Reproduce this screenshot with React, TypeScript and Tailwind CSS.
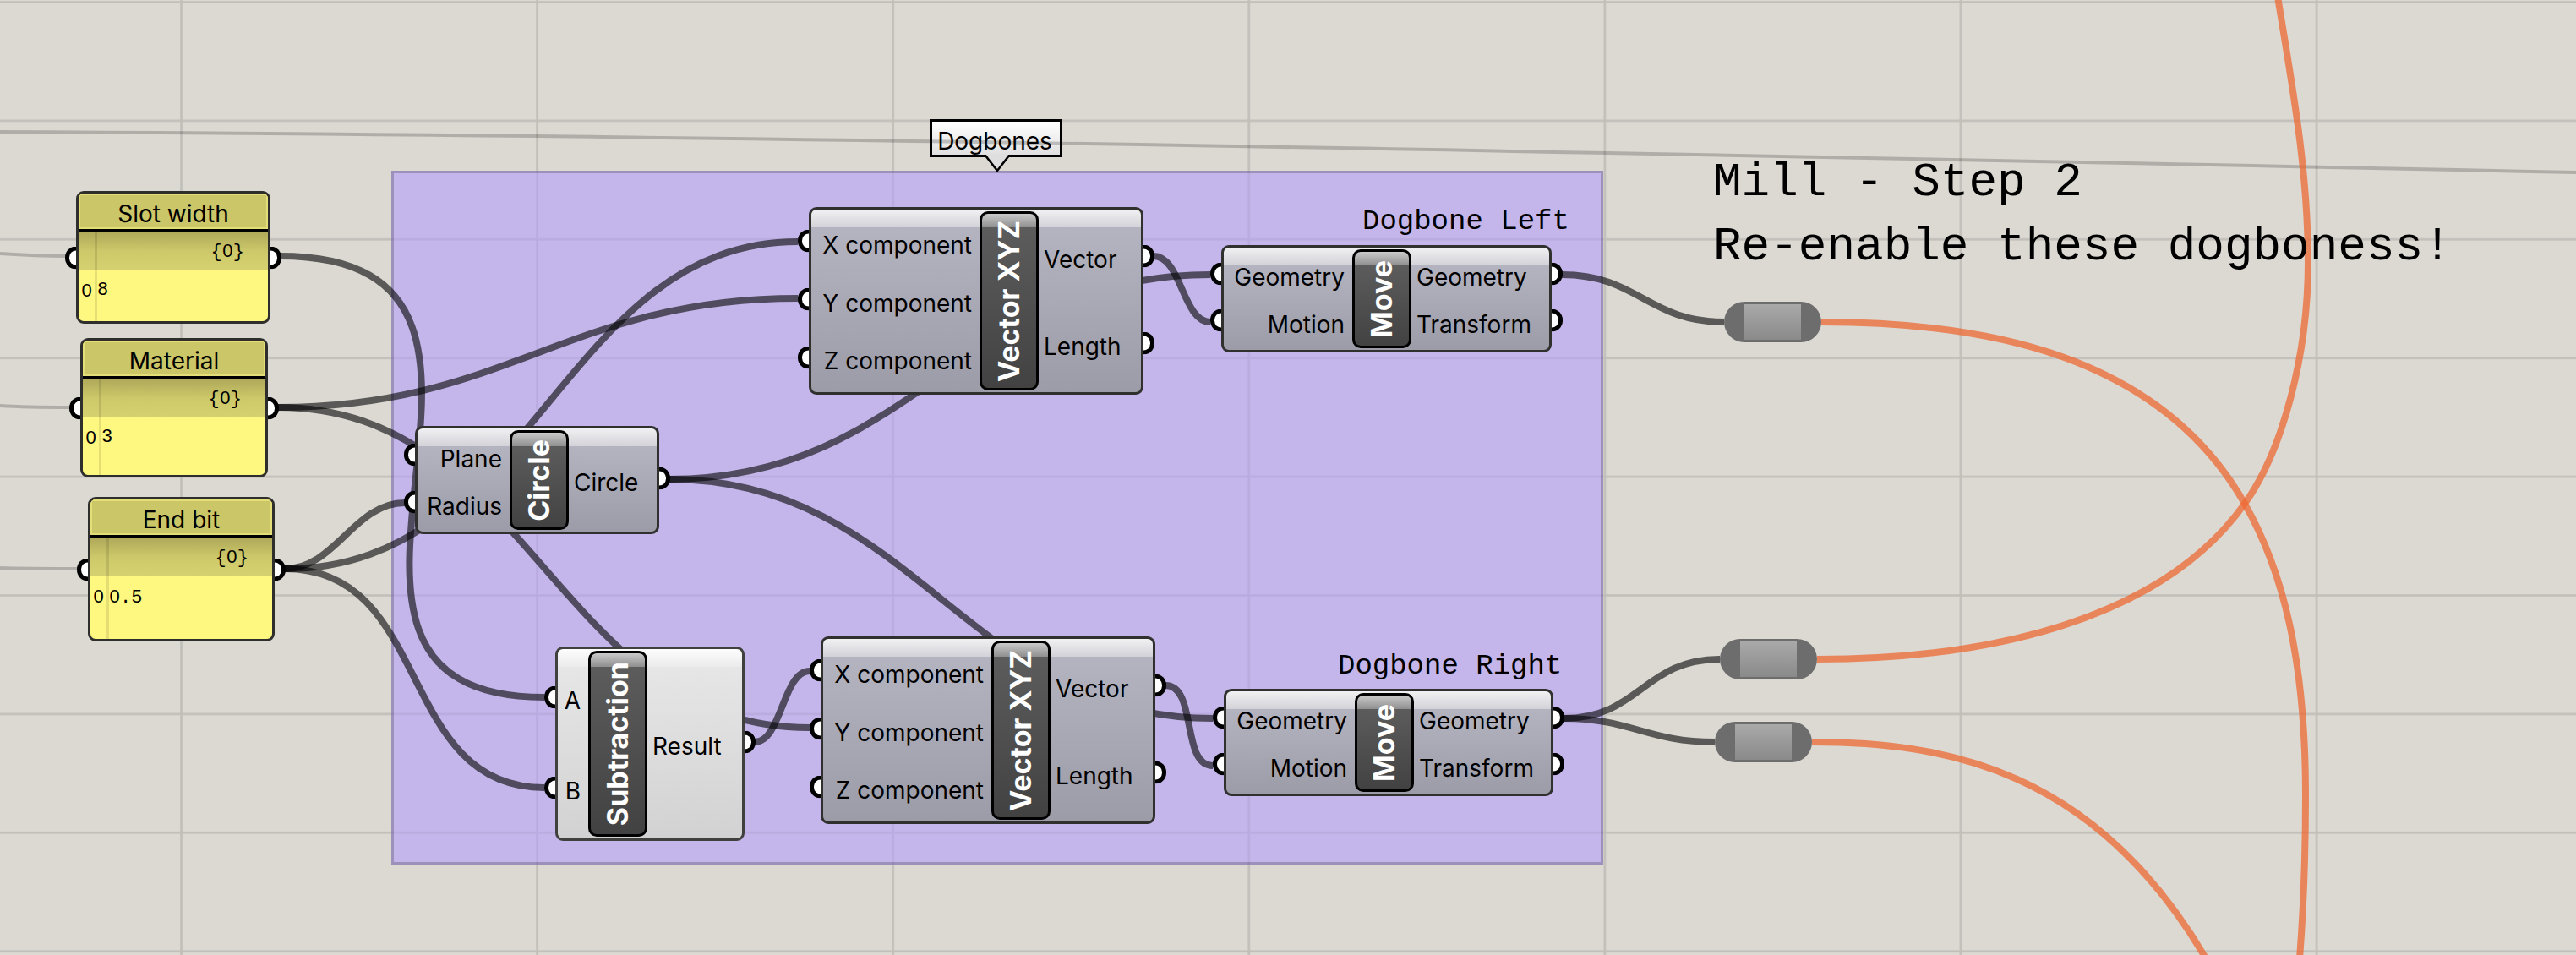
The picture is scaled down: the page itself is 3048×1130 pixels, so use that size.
import React from 'react';

type PanelData = { place: string; size: string; title: string; value: string };
type NodeData = {
  place: string;
  size: string;
  title: string;
  inputs: string[];
  outputs: string[];
  inputCol: string;
  plain?: boolean;
};

const panels: PanelData[] = [
  { place: 'left-[90px] top-[226px]', size: 'w-[230px] h-[157px]', title: 'Slot width', value: '8' },
  { place: 'left-[95px] top-[400px]', size: 'w-[222px] h-[165px]', title: 'Material', value: '3' },
  { place: 'left-[104px] top-[588px]', size: 'w-[221px] h-[171px]', title: 'End bit', value: '0.5' },
];

const nodes: NodeData[] = [
  {
    place: 'left-[491px] top-[504px]', size: 'w-[289px] h-[128px]', title: 'Circle',
    inputs: ['Plane', 'Radius'], outputs: ['Circle'], inputCol: 'w-[109px]',
  },
  {
    place: 'left-[657px] top-[765px]', size: 'w-[224px] h-[230px]', title: 'Subtraction',
    inputs: ['A', 'B'], outputs: ['Result'], inputCol: 'w-[36px]', plain: true,
  },
  {
    place: 'left-[957px] top-[245px]', size: 'w-[396px] h-[222px]', title: 'Vector XYZ',
    inputs: ['X component', 'Y component', 'Z component'], outputs: ['Vector', 'Length'],
    inputCol: 'w-[199px]',
  },
  {
    place: 'left-[971px] top-[753px]', size: 'w-[396px] h-[222px]', title: 'Vector XYZ',
    inputs: ['X component', 'Y component', 'Z component'], outputs: ['Vector', 'Length'],
    inputCol: 'w-[199px]',
  },
  {
    place: 'left-[1445px] top-[290px]', size: 'w-[391px] h-[127px]', title: 'Move',
    inputs: ['Geometry', 'Motion'], outputs: ['Geometry', 'Transform'], inputCol: 'w-[152px]',
  },
  {
    place: 'left-[1448px] top-[815px]', size: 'w-[390px] h-[127px]', title: 'Move',
    inputs: ['Geometry', 'Motion'], outputs: ['Geometry', 'Transform'], inputCol: 'w-[152px]',
  },
];

const relays = ['left-[2040px] top-[357px]', 'left-[2035px] top-[756px]', 'left-[2029px] top-[854px]'];

// A wire leaves and enters its ports horizontally; `pull` is the handle length.
const wire = (x0: number, y0: number, x1: number, y1: number, pull: number, endPull = pull) =>
  `M${x0} ${y0}C${x0 + pull} ${y0} ${x1 - endPull} ${y1} ${x1} ${y1}`;

const darkWires = [
  wire(331, 303, 644, 825, 374, 362),
  wire(329, 482, 944, 353, 270),
  wire(329, 482, 958, 861, 300),
  wire(337, 673, 479, 595, 60),
  wire(337, 673, 944, 286, 296, 280),
  wire(337, 673, 644, 932, 176),
  wire(792, 567, 1432, 325, 290),
  wire(792, 567, 1435, 850, 290),
  wire(893, 878, 958, 794, 32),
  wire(1365, 303, 1432, 381, 33),
  wire(1379, 811, 1435, 906, 38),
  wire(1848, 325, 2040, 381, 90),
  wire(1850, 850, 2035, 780, 90),
  wire(1850, 850, 2029, 878, 80),
];

const thinWires = [
  'M0 156C900 160 1900 180 3048 204',
  'M0 300C30 302 50 303 78 303',
  'M0 480C30 482 50 482 83 482',
  'M0 672C30 673 60 673 92 673',
];

const orangeWires = [
  'M2155 381C2350 381 2556 420 2656 596C2701 675 2728 780 2728 940C2728 1010 2726 1070 2721 1134',
  'M2150 780C2348 780 2556 736 2656 596C2701 533 2731 420 2731 310C2731 200 2711 95 2695 -4',
  'M2144 878C2300 878 2478 909 2610 1134',
];

function Zeroed({ text }: { text: string }) {
  return (
    <>
      {text.split('').map((ch, i) =>
        ch === '0' ? (
          <span key={i} className="inline-block w-[13px] text-center font-['Liberation_Sans',sans-serif]">0</span>
        ) : (
          <React.Fragment key={i}>{ch}</React.Fragment>
        ),
      )}
    </>
  );
}

function Port({ side }: { side: 'left' | 'right' }) {
  return side === 'left' ? (
    <span className="absolute right-full top-1/2 h-[27px] w-[13px] -translate-y-1/2 rounded-l-full border-[5px] border-r-0 border-black bg-white" />
  ) : (
    <span className="absolute left-full top-1/2 h-[27px] w-[13px] -translate-y-1/2 rounded-r-full border-[5px] border-l-0 border-black bg-white" />
  );
}

function Panel({ place, size, title, value }: PanelData) {
  return (
    <section className={`absolute ${place} ${size}`}>
      <Port side="left" />
      <Port side="right" />
      <div className="relative flex h-full flex-col overflow-hidden rounded-[9px] border-[3px] border-[#2e2e2c] bg-[#fef881]">
        <h2 className="h-[45px] shrink-0 border-b-[3px] border-black bg-[#cbc668] pt-[6px] text-center text-[28px] leading-[36px] shadow-[inset_0_0_0_2px_#e3de78]">
          {title}
        </h2>
        <div className="flex h-[46px] shrink-0 bg-linear-to-b from-[#aea85a] via-[#cdc869] to-[#d6d170] font-['Liberation_Mono',monospace] text-[22px] leading-[46px]">
          <span className="w-[22px] border-r-[3px] border-black/10" />
          <span className="flex-1 pr-[28px] text-right">
            <Zeroed text="{0}" />
          </span>
        </div>
        <div className="flex flex-1 font-['Liberation_Mono',monospace] text-[22px] leading-[48px]">
          <span className="w-[22px] border-r-[3px] border-black/10 text-center font-['Liberation_Sans',sans-serif]">0</span>
          <span className="flex-1">
            <Zeroed text={value} />
          </span>
        </div>
      </div>
    </section>
  );
}

function Node({ place, size, title, inputs, outputs, inputCol, plain }: NodeData) {
  const skin = plain
    ? 'border-[#40403e] bg-[linear-gradient(to_bottom,#fdfdfd_0px,#ebebeb_21px,#e6e6e6_21px,#d2d2d2_100%)]'
    : 'border-[#30302e] bg-[linear-gradient(to_bottom,#f1f1f3_0px,#d2d2d8_21px,#b4b4c0_21px,#9c9ca8_100%)]';
  return (
    <section className={`absolute flex ${place} ${size}`}>
      <div className={`absolute inset-0 rounded-[9px] border-[3px] ${skin}`} />
      <ul className={`relative flex shrink-0 flex-col pt-[6px] pb-[10px] ${inputCol}`}>
        {inputs.map((label) => (
          <li key={label} className="relative flex flex-1 items-center justify-end pt-[9px] pr-[6px] whitespace-nowrap">
            <Port side="left" />
            {label}
          </li>
        ))}
      </ul>
      <h3 className="relative my-[5px] ml-[3px] flex w-[70px] shrink-0 items-center justify-center rounded-[10px] border-[3px] border-black bg-[linear-gradient(to_bottom,#cacaca_0px,#8f8f8f_16px,#5c5c5c_16px,#424242_100%)] text-[34px] leading-[40px] font-bold text-white">
        <span className="rotate-180 whitespace-nowrap [writing-mode:vertical-rl]">{title}</span>
      </h3>
      <ul className="relative flex flex-1 flex-col pt-[6px] pb-[10px]">
        {outputs.map((label) => (
          <li key={label} className="relative flex flex-1 items-center pt-[9px] pl-[6px] whitespace-nowrap">
            {label}
            <Port side="right" />
          </li>
        ))}
      </ul>
    </section>
  );
}

export default function App() {
  return (
    <main className="relative min-h-screen w-full overflow-hidden bg-[#dcd9d3] font-['Inter',sans-serif] text-[28px] leading-[36px] text-black">
      <svg className="absolute inset-0 h-full w-full" aria-hidden="true">
        <defs>
          <pattern id="grid" x="213" y="1" width="421.1" height="140.4" patternUnits="userSpaceOnUse">
            <path d="M1.5 0V141M0 1.5H422" fill="none" stroke="#000" strokeOpacity="0.12" strokeWidth="2.6" />
          </pattern>
        </defs>
        <rect width="100%" height="100%" fill="url(#grid)" />
      </svg>

      <div className="absolute top-[202px] left-[463px] h-[821px] w-[1434px] border-[3px] border-black/20 bg-[rgba(179,157,249,0.58)]" />

      <div className="absolute top-[141px] left-[1100px] h-[45px] w-[157px] border-[3px] border-black bg-linear-to-b from-white to-[#e0e0e0] pr-[3px] text-center leading-[47px]">
        Dogbones
        <svg className="absolute top-[37px] left-[61px]" width="32" height="26" viewBox="0 0 32 26" aria-hidden="true">
          <path d="M2 1L16 21L30 1" fill="#dedede" />
          <path d="M2 3L16 21L30 3" fill="none" stroke="#000" strokeWidth="2.6" />
        </svg>
      </div>

      <svg className="absolute inset-0 h-full w-full" fill="none" aria-hidden="true">
        {thinWires.map((d) => (
          <path key={d} d={d} stroke="#000" strokeOpacity="0.2" strokeWidth="4" />
        ))}
        {darkWires.map((d) => (
          <path key={d} d={d} stroke="#000" strokeOpacity="0.59" strokeWidth="8" />
        ))}
        {orangeWires.map((d) => (
          <path key={d} d={d} stroke="#ed6831" strokeOpacity="0.75" strokeWidth="8" />
        ))}
      </svg>

      {panels.map((p) => (
        <Panel key={p.title} {...p} />
      ))}
      {nodes.map((n) => (
        <Node key={n.place} {...n} />
      ))}
      {relays.map((place) => (
        <div key={place} className={`absolute h-12 w-[115px] rounded-full bg-[#6d6d6d] px-6 py-[3px] ${place}`}>
          <div className="h-full bg-linear-to-b from-[#a9a9a9] to-[#8a8a8a]" />
        </div>
      ))}

      <p className="absolute top-[242px] left-[1612px] font-['Liberation_Mono',monospace] text-[34px] leading-[40px] whitespace-nowrap">
        Dogbone Left
      </p>
      <p className="absolute top-[768px] left-[1583px] font-['Liberation_Mono',monospace] text-[34px] leading-[40px] whitespace-nowrap">
        Dogbone Right
      </p>
      <p className="absolute top-[178px] left-[2027px] font-['Liberation_Mono',monospace] text-[56px] leading-[76px] whitespace-nowrap">
        Mill - Step 2<br />
        Re-enable these dogboness!
      </p>
    </main>
  );
}
